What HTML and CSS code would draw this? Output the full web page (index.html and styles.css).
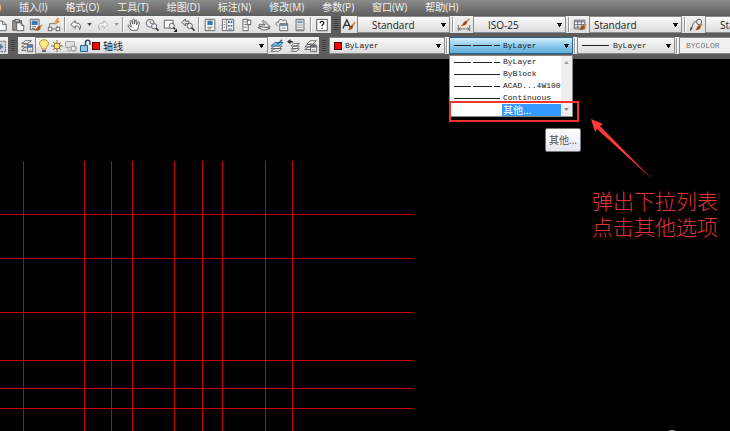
FILE: index.html
```html
<!DOCTYPE html>
<html lang="zh-CN">

<head>
    <meta charset="UTF-8">
    <meta name="viewport" content="width=device-width, initial-scale=1.0">
    <title>CAD</title>
    <link rel="stylesheet" href="styles.css">
</head>

<body>
    <div class="page">
        <!-- Menu bar -->
        <nav class="menu">
            <button class="menu-btn">视图(V)</button>
            <button class="menu-btn">插入(I)</button>
            <button class="menu-btn">格式(O)</button>
            <button class="menu-btn">工具(T)</button>
            <button class="menu-btn">绘图(D)</button>
            <button class="menu-btn">标注(N)</button>
            <button class="menu-btn">修改(M)</button>
            <button class="menu-btn">参数(P)</button>
            <button class="menu-btn">窗口(W)</button>
            <button class="menu-btn">帮助(H)</button>
        </nav>

        <!-- Standard and styles toolbars -->
        <div class="row row-standard">
            <div class="bar">
                <button class="icon-btn" aria-label="复制"><svg viewBox="0 0 16 16"><path class="paper" d="M5 3.500h6l4 4v7H5z"/><path class="line" d="M11 3.500v4h4"/></svg></button>
                <button class="icon-btn" aria-label="粘贴"><svg viewBox="0 0 16 16"><path d="M2 3h10v11H2z" fill="#9a8f80" stroke="#555"/><path d="M4.500 1.500h5v3h-5z" fill="#ccc" stroke="#555"/><path class="paper" d="M6.500 5.500h5l3 3v6h-8z"/><path class="line" d="M11.500 5.500v3h3"/></svg></button>
                <button class="icon-btn" aria-label="特性匹配"><svg viewBox="0 0 16 16"><path class="paper" d="M1.500 1.500h10v12h-10z"/><path d="M3 3h7v5H3z" fill="#3979b8"/><path class="line" d="M3 10h5M3 12h4"/><path d="M15 8l-4 3" stroke="#d9a35c" stroke-width="2"/><path d="M12 9c2 1 2 3-1 5-2 1-4 0-5-1 3 0 3-4 6-4z" fill="#a5531b"/></svg></button>
                <button class="icon-btn" aria-label="块编辑器"><svg viewBox="0 0 16 16"><path class="line" d="M3 12V6.500h7M3 12.500h9V9"/><path class="paper" d="M1.500 10.500h4v4h-4zM10.500 10.500h4v4h-4z"/><path d="M12 0L8 5h3L9 9l6-6h-3l2-3z" fill="#f08a24"/></svg></button>
                <span class="sep"></span>
                <button class="icon-btn" aria-label="放弃"><svg viewBox="0 0 16 16"><path d="M7 3L2 7.500 7 12V9.500c3-1 5 0 5 4 3-5 0-8-5-8z" fill="#f4f4f4" stroke="#555" stroke-linejoin="round"/></svg></button>
                <button class="caret-btn" aria-label="放弃列表"><svg viewBox="0 0 6 4"><path d="M0 0h6L3 4z" fill="#444"/></svg></button>
                <button class="icon-btn" aria-label="重做"><svg viewBox="0 0 16 16"><path d="M9 3l5 4.500L9 12V9.500c-3-1-5 0-5 4-3-5 0-8 5-8z" fill="#f4f4f4" stroke="#aaa" stroke-linejoin="round"/></svg></button>
                <button class="caret-btn" aria-label="重做列表"><svg viewBox="0 0 6 4"><path d="M0 0h6L3 4z" fill="#999"/></svg></button>
                <span class="sep"></span>
                <button class="icon-btn" aria-label="平移"><svg viewBox="0 0 16 16"><path d="M5 14L1.500 9.500c-1-2 1-2 2-.5L5 10.500 3.500 4c0-1.500 1.500-1.500 2 0L6.500 7V2.500c0-1.500 2-1.500 2 0V7l1-4c.5-1.500 2-1 1.800.3L10.800 8l1.700-3c.8-1 2-.3 1.600.8L12 14z" fill="#fff" stroke="#555"/></svg></button>
                <button class="icon-btn" aria-label="实时缩放"><svg viewBox="0 0 16 16"><circle class="lens" cx="6" cy="6" r="4.500"/><path class="line" d="M6 3v3h3"/><circle class="lens" cx="10.500" cy="9.500" r="3"/><path class="handle" d="M12.500 11.500l3 3"/></svg></button>
                <button class="icon-btn" aria-label="窗口缩放"><svg viewBox="0 0 16 16"><path class="paper" d="M1.500 2.500h10v9h-10z"/><circle class="lens" cx="10" cy="9" r="3"/><path class="handle" d="M12 11l2 2"/><path d="M16 12v4h-4z" fill="#222"/></svg></button>
                <button class="icon-btn" aria-label="缩放上一个"><svg viewBox="0 0 16 16"><path d="M5 1L1 5l4 4V6.500h4v-3H5z" fill="#ddd" stroke="#555"/><circle class="lens" cx="10" cy="9" r="3"/><path class="handle" d="M12 11l3.500 3.500"/></svg></button>
                <span class="sep"></span>
                <button class="icon-btn" aria-label="特性"><svg viewBox="0 0 16 16"><path class="paper" d="M2.500 1.500h11v13h-11z"/><path d="M5 3h6v5H5z" fill="#3979b8"/><path class="line" d="M5 10.500h6M5 12.500h4"/></svg></button>
                <button class="icon-btn" aria-label="设计中心"><svg viewBox="0 0 16 16"><path class="paper" d="M1.500 1.500h13v13h-13z"/><path class="line" d="M6.500 2v12M3 4.500h2M3 7.500h2M3 10.500h2"/><path d="M8 3h2v3H8zM11 3h2v3h-2zM8 8h2v2H8zM11 8h2v2h-2zM8 12h5v1H8z" fill="#527292"/></svg></button>
                <button class="icon-btn" aria-label="工具选项板"><svg viewBox="0 0 16 16"><path class="paper" d="M4.500 1.500h6v13h-6z"/><path class="paper" d="M9.500 2.500h4v5h-4z"/><path class="line" d="M6 4.500h3M6 7.500h3M6 10.500h3"/></svg></button>
                <button class="icon-btn" aria-label="图纸集"><svg viewBox="0 0 16 16"><path d="M1 11l7 3 7-2-6-3z" fill="#eee" stroke="#555"/><path d="M2 9l8 2 5-1-7-7c-2-1-2 1-1 2l2 3-6-1z" fill="#d4dde4" stroke="#555"/></svg></button>
                <button class="icon-btn" aria-label="标记集"><svg viewBox="0 0 16 16"><path d="M3 9C0 8 1 4 4 5c0-4 4-4 5-2 3-2 5 0 4 3" fill="#eee" stroke="#555"/><path class="paper" d="M5.500 6.500h9v8h-9z"/><path d="M6 7h8v2H6z" fill="#6b7a88"/><path class="line" d="M8 11.500h4"/></svg></button>
                <button class="icon-btn" aria-label="计算器"><svg viewBox="0 0 16 16"><path class="paper" d="M3.500 1.500h9v13h-9z"/><path d="M5 3h6v3H5z" fill="#8798a8"/><path d="M5 8h6M5 10.500h6M5 13h6" stroke="#555" stroke-dasharray="1.500 .7"/></svg></button>
                <span class="sep"></span>
                <button class="icon-btn" aria-label="帮助"><svg viewBox="0 0 16 16"><path d="M2 1.500h12v13H2z" fill="#fff" stroke="#444"/><path d="M6 6c0-3 4.500-2.500 4 0-.3 1.500-2 1.500-2 3.500M8 11v1.500" fill="none" stroke="#222" stroke-width="1.500"/></svg></button>
            </div>
            <span class="grip"></span>
            <div class="bar bar-fill">
                <button class="icon-btn brush-btn" aria-label="文字样式"><svg viewBox="0 0 16 16"><path d="M1 12L5.500 2l4 9M3 8.500h5.500" fill="none" stroke="#333" stroke-width="1.500"/><path d="M15 5l-4 5" stroke="#c98d4e" stroke-width="2"/><path d="M12 8c2 2 0 6-6 6 3-1 2-5 6-6z" fill="#9b4d1c"/></svg></button>
                <label class="combo combo-style"><select class="ui" aria-label="文字样式"><option>Standard</option></select></label>
                <span class="sep"></span>
                <button class="icon-btn" aria-label="标注样式"><svg viewBox="0 0 16 16"><path class="line" d="M1.500 8v7M14.500 8v7M2 12.500h12M4 10.500l-2 2 2 2M12 10.500l2 2-2 2"/><path d="M14 1l-4 4" stroke="#c98d4e" stroke-width="2"/><path d="M10 3c3 2 1 6-6 6 3-1 3-5 6-6z" fill="#9b4d1c"/></svg></button>
                <label class="combo combo-style"><select class="ui" aria-label="标注样式"><option>ISO-25</option></select></label>
                <span class="sep"></span>
                <button class="icon-btn" aria-label="表格样式"><svg viewBox="0 0 16 16"><path class="paper" d="M1.500 2.500h12v10h-12z"/><path d="M2 3h11v2H2z" fill="#8795a2"/><path class="line" d="M5.500 3v9M9.500 3v9M2 7.500h11M2 10.500h11"/><path d="M15 7l-3 3" stroke="#c98d4e" stroke-width="2"/><path d="M12 8c3 2 1 6-5 6 2-1 2-5 5-6z" fill="#9b4d1c"/></svg></button>
                <label class="combo combo-style combo-left"><select class="ui" aria-label="表格样式"><option>Standard</option></select></label>
                <span class="sep"></span>
                <button class="icon-btn" aria-label="多重引线样式"><svg viewBox="0 0 16 16"><path d="M2 14l3-8" stroke="#444" fill="none"/><path d="M1 15l1-5 2 2z" fill="#444"/><path d="M5 6c1-2 2-2 4-2" stroke="#444" fill="none"/><circle class="lens" cx="11.500" cy="4.500" r="3"/><path d="M15 7l-3 3" stroke="#c98d4e" stroke-width="2"/><path d="M12 8c3 2 1 6-5 6 2-1 2-5 5-6z" fill="#9b4d1c"/></svg></button>
                <label class="combo combo-style"><select class="ui" aria-label="多重引线样式"><option>Standard</option></select></label>
            </div>
        </div>

        <!-- Layers and properties toolbars -->
        <div class="row row-layers">
            <div class="bar">
                <button class="icon-btn" aria-label="工作空间"><svg viewBox="0 0 16 16"><path d="M2.500 2.500h12v12h-12z" fill="#ccd3d9" stroke="#555" stroke-dasharray="2 1"/><path d="M8 5l4 4-4 3z" fill="#667788"/></svg></button>
            </div>
            <span class="grip"></span>
            <div class="bar">
                <button class="icon-btn" aria-label="图层特性管理器"><svg viewBox="0 0 16 16"><path d="M2 5l4-3h7l-4 3zM2 9l3-3h5M2 13l3-3h3M2 9h5M2 13h5" fill="#fff" stroke="#555"/><path class="paper" d="M8.500 6.500h6v8h-6z"/><path d="M9 7h5v3H9z" fill="#3979b8"/><path class="line" d="M10 12.500h3"/></svg></button>
                <label class="combo combo-layer">
                    <svg class="state" viewBox="0 0 12 14"><path d="M4 10C4 7 1.500 7 1.500 4.500c0-5 9-5 9 0C10.500 7 8 7 8 10z" fill="#ffe983" stroke="#a88c3c"/><path d="M4 11h4v2H4z" fill="#667"/></svg>
                    <svg class="state" viewBox="0 0 12 14"><path d="M6 1v12M0 7h12M2 3l8 8M10 3l-8 8" stroke="#8b7332"/><circle cx="6" cy="7" r="3" fill="#ffe36a" stroke="#8b7332"/></svg>
                    <svg class="state state-wide" viewBox="0 0 14 14"><path d="M1.500 2.500h9v6h-9zM4 9v3h3" fill="#ddd" stroke="#aaa"/><circle cx="9.500" cy="9.500" r="2.500" fill="#eee" stroke="#aaa" stroke-width="1.500"/></svg>
                    <svg class="state" viewBox="0 0 12 14"><path d="M6.500 6V3.500c0-3 4.500-3 4.500 0V6" fill="none" stroke="#447" stroke-width="1.500"/><path d="M1.500 6.500h7v6h-7z" fill="#8bc5e8" stroke="#276694"/></svg>
                    <span class="swatch"></span>
                    <select aria-label="图层"><option>轴线</option></select>
                </label>
                <button class="icon-btn" aria-label="置为当前图层"><svg viewBox="0 0 16 16"><path d="M1 14l4-3h8l-3 3zM1 11l4-3h9l-4 3z" fill="#fff" stroke="#555"/><path d="M1 8l5-4h9l-5 4z" fill="#7fc0e8" stroke="#276694"/><path d="M8 6l6-5" stroke="#276694" stroke-width="1.500"/></svg></button>
                <button class="icon-btn" aria-label="上一个图层"><svg viewBox="0 0 16 16"><path d="M5 14l3-3h6l-3 3zM5 11l3-3h6l-3 3zM5 8l3-3h6l-3 3z" fill="#fff" stroke="#555"/><path d="M0 3l4-3v2c3 0 3 1 3 3-1-1-1-1-3-1v2z" fill="#333"/></svg></button>
                <button class="icon-btn" aria-label="图层状态"><svg viewBox="0 0 16 16"><path d="M1 12l4-3h7l-3 3zM1 9l4-3h8l-4 3zM3 6l4-4h7l-4 4z" fill="#fff" stroke="#555"/><path class="paper" d="M7.500 7.500h7v7h-7z"/><path d="M8 8h6v2H8z" fill="#677685"/><path class="line" d="M9 12.500h4"/></svg></button>
            </div>
            <span class="grip"></span>
            <div class="bar bar-fill">
                <label class="combo combo-color">
                    <span class="swatch"></span>
                    <select class="mono" aria-label="颜色"><option>ByLayer</option></select>
                </label>
                <span class="sep"></span>
                <div class="linetype">
                    <label class="combo combo-open">
                        <svg class="sample" viewBox="0 0 46 3"><path d="M0 1.500h17M19 1.500h19M40 1.500h6"/></svg>
                        <select class="mono" aria-label="线型"><option>ByLayer</option></select>
                    </label>
                    <div class="popup">
                        <div class="popup-list" role="listbox" aria-label="线型列表">
                            <button class="choice" role="option"><svg class="sample" viewBox="0 0 46 3"><path d="M0 1.500h17M19 1.500h19M40 1.500h6"/></svg><span>ByLayer</span></button>
                            <button class="choice" role="option"><svg class="sample" viewBox="0 0 46 3"><path d="M0 1.500h46"/></svg><span>ByBlock</span></button>
                            <button class="choice" role="option"><svg class="sample" viewBox="0 0 46 3"><path d="M0 1.500h17M19 1.500h19M40 1.500h6"/></svg><span>ACAD...4W100</span></button>
                            <button class="choice" role="option"><svg class="sample" viewBox="0 0 46 3"><path d="M0 1.500h46"/></svg><span>Continuous</span></button>
                            <button class="choice selected" role="option" aria-selected="true"><svg class="sample" viewBox="0 0 46 3"></svg><span>其他...</span></button>
                        </div>
                        <div class="scroll">
                            <button class="scroll-btn" aria-label="向上"><svg viewBox="0 0 6 4"><path d="M0 4h6L3 0z" fill="#999"/></svg></button>
                            <button class="scroll-btn" aria-label="向下"><svg viewBox="0 0 6 4"><path d="M0 0h6L3 4z" fill="#888"/></svg></button>
                        </div>
                    </div>
                </div>
                <span class="sep"></span>
                <label class="combo combo-weight">
                    <svg class="sample sample-short" viewBox="0 0 27 3"><path d="M0 1.500h27"/></svg>
                    <select class="mono" aria-label="线宽"><option>ByLayer</option></select>
                </label>
                <span class="sep"></span>
                <label class="combo combo-plot"><select class="mono" aria-label="打印样式" disabled><option>BYCOLOR</option></select></label>
            </div>
        </div>

        <!-- Drawing area -->
        <main class="canvas">
            <svg class="drawing" width="100%" height="100%">
                <g class="axis">
                    <path d="M23.500 102v900M84.500 102v900M111.500 102v900M132.500 102v900M174.500 102v900M202.500 102v900M222.500 102v900M265.500 102v900M292.500 102v900"/>
                    <path d="M0 155.500h413M0 199.500h413M0 253.500h413M0 301.500h413M0 329.500h413M0 349.500h413"/>
                </g>
                <path d="M591 60l12 5-3 2 52 53-55-50-2 3z" fill="#ff3a3a"/>
                <circle cx="672" cy="377" r="6" fill="#bbb"/>
            </svg>
            <div class="mark"></div>
            <div class="tip" role="tooltip">其他...</div>
            <p class="note">弹出下拉列表<br>点击其他选项</p>
        </main>
    </div>
</body>

</html>
```
FILE: styles.css
```css
/* Global Style */
* {
    margin: 0;
    padding: 0;
    box-sizing: border-box;
}

body {
    font-family: "Open Sans", "Noto Sans CJK SC", sans-serif;
    font-size: 10px;
    background-color: #000;
    color: #222;
}

button,
select {
    font: inherit;
    color: inherit;
    border: none;
    background: none;
    cursor: pointer;
}

svg {
    display: block;
    flex: none;
}

.page {
    display: flex;
    flex-direction: column;
    height: 100vh;
    overflow: hidden;
}

/* Menu bar */
.menu {
    display: flex;
    gap: 18px;
    height: 16px;
    margin-left: -31px;
    background: linear-gradient(#8c8c8c, #5e5e5e);
}

.menu-btn {
    flex: none;
    height: 14px;
    line-height: 14px;
    color: #f2f2f2;
    white-space: nowrap;
}

/* Toolbars */
.row {
    display: flex;
    flex: none;
    margin-left: -9px;
    background-color: #5c5c5c;
}

.row-standard {
    height: 21px;
    padding-bottom: 4px;
}

.row-layers {
    height: 22px;
    padding-bottom: 5px;
}

.bar {
    display: flex;
    align-items: center;
    flex: none;
    background: linear-gradient(#f2f2f2, #dedede);
}

.bar-fill {
    flex: 1;
    min-width: 0;
}

.icon-btn {
    display: flex;
    align-items: center;
    justify-content: center;
    flex: none;
    width: 18px;
    height: 16px;
}

.icon-btn svg {
    width: 14px;
    height: 14px;
}

.row-layers .icon-btn {
    width: 17px;
}

.row-standard .brush-btn {
    width: 16px;
}

.caret-btn {
    flex: none;
    width: 9px;
    padding: 0 2px;
}

.caret-btn svg {
    width: 5px;
    height: 3px;
}

.paper {
    fill: #f8f9fa;
    stroke: #555;
}

.line {
    fill: none;
    stroke: #666;
}

.lens {
    fill: #e6eef4;
    stroke: #555;
}

.handle {
    stroke: #444;
    stroke-width: 2;
}

.sep {
    flex: none;
    width: 2px;
    height: 15px;
    margin: 0 1px;
    border-left: 1px solid #999;
    border-right: 1px solid #fff;
}

.row-standard .bar-fill .sep {
    margin-left: 2px;
}

.grip {
    flex: none;
    width: 10px;
    border: 3px solid #5c5c5c;
    background: repeating-linear-gradient(#3c3c3c 0 1px, #666 1px 2px);
}

/* Drop-downs */
.combo {
    display: flex;
    align-items: center;
    flex: none;
    height: 17px;
    padding-left: 4px;
    border: 1px solid #8a8a8a;
    background: linear-gradient(#fafafa, #dcdcdc);
}

.combo select {
    flex: 1;
    min-width: 0;
    height: 15px;
    padding-right: 12px;
    appearance: none;
    outline: none;
    background: conic-gradient(from -37deg at 50% 100%, #111 74deg, transparent 0) no-repeat right 2px center / 7px 4px;
}

.ui {
    padding-left: 10px;
}

.combo-style {
    width: 93px;
}

.combo-left .ui {
    padding-left: 0;
}

.combo-layer {
    width: 233px;
    padding-left: 2px;
    gap: 1px;
}

.combo-layer select {
    padding-left: 2px;
}

.combo-color {
    width: 116px;
    gap: 3px;
}

.combo-open {
    width: 124px;
    gap: 3px;
    border-color: #2c628b;
    background: linear-gradient(#d5effc, #8ecbec 50%, #5eaedb);
}

.combo-weight {
    width: 98px;
    gap: 4px;
}

.combo-plot {
    width: 98px;
    padding-left: 6px;
    background: #f0f0f0;
}

.combo-plot select {
    color: #777;
    opacity: 1;
}

.mono {
    font-family: "Liberation Mono", monospace;
    font-size: 8px;
}

.state {
    width: 12px;
    height: 14px;
}

.state-wide {
    width: 14px;
}

.swatch {
    flex: none;
    width: 8px;
    height: 8px;
    border: 1px solid #500;
    background-color: #f00;
}

.sample {
    width: 46px;
    height: 3px;
    fill: none;
    stroke: #222;
}

.sample-short {
    width: 27px;
}

/* Open line type list */
.linetype {
    position: relative;
    flex: none;
}

.popup {
    position: absolute;
    z-index: 1;
    top: 18px;
    left: 0;
    display: flex;
    width: 124px;
    border: 1px solid #888;
    background-color: #fff;
}

.popup-list {
    flex: 1;
    min-width: 0;
}

.choice {
    display: flex;
    align-items: center;
    gap: 2px;
    width: 100%;
    height: 12px;
    padding-left: 4px;
    font-family: "Liberation Mono", "Noto Sans CJK SC", monospace;
    font-size: 8px;
    line-height: 12px;
    text-align: left;
    white-space: nowrap;
}

.choice span {
    flex: 1;
    padding-left: 1px;
}

.selected span {
    font-family: "Noto Sans CJK SC", sans-serif;
    font-size: 10px;
    color: #fff;
    background-color: #39f;
}

.scroll {
    display: flex;
    flex-direction: column;
    justify-content: space-between;
    width: 11px;
    background-color: #eee;
}

.scroll-btn {
    height: 13px;
    padding: 0 3px;
}

.scroll-btn svg {
    width: 5px;
    height: 3px;
}

/* Drawing area */
.canvas {
    position: relative;
    flex: 1;
    min-height: 0;
    background-color: #000;
}

.drawing {
    overflow: hidden;
}

.axis {
    fill: none;
    stroke: #c80000;
}

.mark {
    position: absolute;
    z-index: 2;
    top: 42px;
    left: 449px;
    width: 130px;
    height: 21px;
    border: 2px solid #f03434;
}

.tip {
    position: absolute;
    top: 69px;
    left: 545px;
    padding: 0 3px;
    line-height: 22px;
    color: #555;
    border: 1px solid #777;
    border-radius: 2px;
    background: linear-gradient(#fff, #e4e5f0);
}

.note {
    position: absolute;
    top: 128px;
    left: 592px;
    font-family: "Noto Sans CJK SC", sans-serif;
    font-size: 21px;
    font-weight: 300;
    line-height: 26px;
    color: #e03434;
    white-space: nowrap;
}
```
